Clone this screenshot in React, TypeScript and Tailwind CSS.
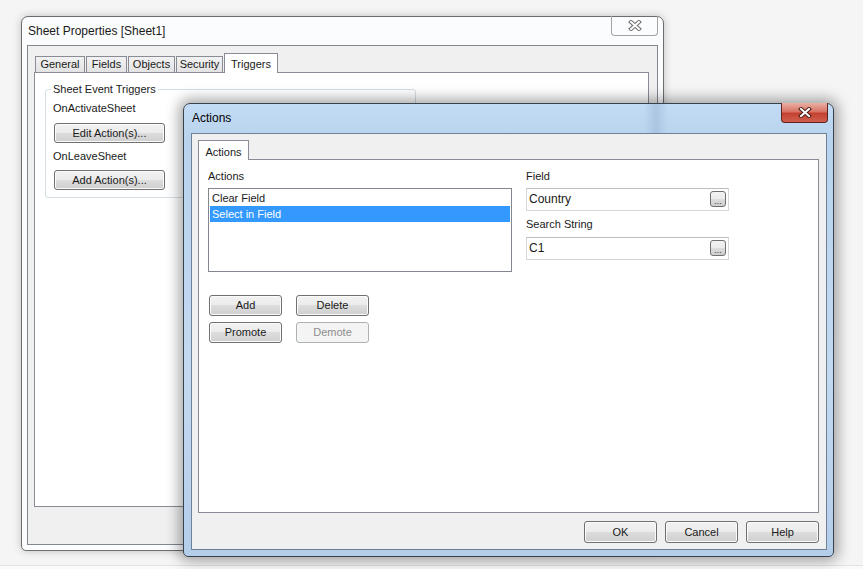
import React from 'react';

// Win7 style dialogs: "Sheet Properties" behind, "Actions" on top

type BtnProps = {
  label: string;
  className: string;
  disabled?: boolean;
};

const Btn = ({ label, className, disabled }: BtnProps) => {
  if (disabled) {
    return (
      <div className={`${className} flex items-center justify-center rounded-[3px] border border-[#adb2b5] bg-[#f4f4f4] text-[11px] text-[#8d8d8d]`}>
        {label}
      </div>
    );
  }
  return (
    <div className={`${className} flex items-center justify-center rounded-[3px] border border-[#707070] bg-[linear-gradient(to_bottom,#f2f2f2_0%,#ebebeb_50%,#dddddd_50%,#cfcfcf_100%)] shadow-[inset_0_0_0_1px_#fbfbfb] text-[11px] text-[#1a1a1a]`}>
      {label}
    </div>
  );
};

const CloseGlyph = ({ active }: { active: boolean }) => (
  <svg width="14" height="11" viewBox="0 0 14 11">
    <g strokeLinecap="square">
      <path d="M3 2 L11 9 M11 2 L3 9" stroke={active ? '#4a1c18' : '#6f6f6f'} strokeWidth="4" />
      <path d="M3 2 L11 9 M11 2 L3 9" stroke="#ffffff" strokeWidth="2" />
    </g>
  </svg>
);

const Ellipsis = () => (
  <div className="flex h-[16px] w-[16px] items-end justify-center rounded-[3px] border border-[#707070] bg-[linear-gradient(to_bottom,#f2f2f2_0%,#ebebeb_50%,#dddddd_50%,#cfcfcf_100%)] pb-[2px] text-[9px] leading-[6px] text-[#333]">
    ...
  </div>
);

const sheetTabs = [
  { name: 'General', w: 'w-[50px]' },
  { name: 'Fields', w: 'w-[41px]' },
  { name: 'Objects', w: 'w-[47px]' },
  { name: 'Security', w: 'w-[47px]' },
];

const SheetProperties = () => (
  <div className="absolute left-[21px] top-[16px] flex h-[535px] w-[643px] flex-col rounded-t-[7px] rounded-b-[5px] border border-[#6d6d6d] bg-[#fbfcfd] shadow-[0_0_8px_rgba(0,0,0,0.22)]">
    <div className="relative flex h-[28px] items-center pl-[6px] text-[12px] text-[#1a1a1a]">
      Sheet Properties [Sheet1]
      <div className="absolute right-[5px] top-[-1px] flex h-[20px] w-[47px] items-center justify-center rounded-b-[4px] border border-t-0 border-[#a3a3a3]">
        <CloseGlyph active={false} />
      </div>
    </div>
    <div className="mx-[5px] flex h-[500px] flex-col border border-[#828790] bg-[#f0f0f0] pl-[6px] pt-[7px]">
      <div className="flex h-[19px] items-end pl-[1px]">
        {sheetTabs.map((t) => (
          <div
            key={t.name}
            className={`${t.w} mr-[1px] flex h-[16px] items-center justify-center border border-b-0 border-[#898c95] bg-[linear-gradient(to_bottom,#f2f2f2,#e3e3e3)] text-[11px] text-[#1a1a1a]`}
          >
            {t.name}
          </div>
        ))}
        <div className="relative z-10 -mb-px flex h-[20px] w-[54px] items-start justify-center border border-b-0 border-[#898c95] bg-white pt-[2px] text-[11px] text-[#1a1a1a]">
          Triggers
        </div>
      </div>
      <div className="h-[435px] w-[615px] border border-[#898c95] bg-white pl-[10px] pt-[16px]">
        <div className="relative h-[109px] w-[371px] rounded-[3px] border border-[#d5dfe5] pl-[7px] pt-[12px] text-[#1a1a1a]">
          <div className="absolute left-[5px] top-[-7px] bg-white px-[2px] text-[11px] leading-[13px]">
            Sheet Event Triggers
          </div>
          <div className="text-[11px] leading-[13px]">OnActivateSheet</div>
          <Btn label="Edit Action(s)..." className="ml-[1px] mt-[8px] h-[20px] w-[111px]" />
          <div className="mt-[7px] text-[11px] leading-[13px]">OnLeaveSheet</div>
          <Btn label="Add Action(s)..." className="ml-[1px] mt-[7px] h-[20px] w-[111px]" />
        </div>
      </div>
    </div>
  </div>
);

const ActionsDialog = () => (
  <div className="absolute left-[183px] top-[103px] flex h-[454px] w-[651px] flex-col rounded-t-[7px] rounded-b-[5px] border border-[#37424e] bg-[linear-gradient(to_bottom,#c3dbf4_0%,#b9d3ee_8%,#c2d9f1_60%,#b4cde9_100%)] shadow-[0_0_14px_4px_rgba(0,0,0,0.35)]">
    <div className="relative flex h-[29px] items-center pb-[2px] pl-[8px] text-[12px] text-black">
      <div className="absolute left-[460px] top-0 h-[29px] w-[24px] bg-[linear-gradient(to_right,transparent,#a3bedb,transparent)] opacity-70" />
      <span className="relative">Actions</span>
      <div className="absolute right-[5px] top-[-1px] flex h-[20px] w-[47px] items-center justify-center rounded-b-[4px] border border-t-0 border-[#5b2622] bg-[linear-gradient(to_bottom,#eab0a4_0%,#d87466_45%,#c4412f_55%,#d1604f_100%)]">
        <CloseGlyph active />
      </div>
    </div>
    <div className="ml-[7px] flex h-[417px] w-[636px] flex-col border border-[#6e8196] bg-[#f0f0f0] pl-[6px] pt-[6px] text-[#1a1a1a]">
      <div className="flex h-[19px] items-end">
        <div className="relative z-10 -mb-px flex h-[20px] w-[51px] items-start justify-center border border-b-0 border-[#898c95] bg-white pt-[3px] text-[11px]">
          Actions
        </div>
      </div>
      <div className="flex h-[354px] w-[621px] border border-[#898c95] bg-white pl-[9px] pt-[10px]">
        <div className="flex w-[304px] flex-col">
          <div className="mb-[5px] text-[11px] leading-[13px]">Actions</div>
          <div className="h-[84px] w-[304px] border border-[#828790] bg-white p-px">
            <div className="h-[16px] pl-[2px] text-[11px] leading-[16px]">Clear Field</div>
            <div className="h-[16px] bg-[#3399ff] pl-[2px] text-[11px] leading-[16px] text-white">Select in Field</div>
          </div>
          <div className="ml-[1px] mt-[23px] flex gap-[14px]">
            <Btn label="Add" className="h-[21px] w-[73px]" />
            <Btn label="Delete" className="h-[21px] w-[73px]" />
          </div>
          <div className="ml-[1px] mt-[6px] flex gap-[14px]">
            <Btn label="Promote" className="h-[21px] w-[73px]" />
            <Btn label="Demote" className="h-[21px] w-[73px]" disabled />
          </div>
        </div>
        <div className="ml-[14px] flex w-[203px] flex-col">
          <div className="mb-[5px] text-[11px] leading-[13px]">Field</div>
          <div className="flex h-[23px] items-center justify-between border border-[#d6d6d6] border-t-[#bdbdbd] bg-white pb-[2px] pl-[2px] pr-[2px] text-[12px]">
            <span>Country</span>
            <Ellipsis />
          </div>
          <div className="mb-[6px] mt-[7px] text-[11px] leading-[13px]">Search String</div>
          <div className="flex h-[23px] items-center justify-between border border-[#d6d6d6] border-t-[#bdbdbd] bg-white pb-[2px] pl-[2px] pr-[2px] text-[12px]">
            <span>C1</span>
            <Ellipsis />
          </div>
        </div>
      </div>
      <div className="mt-[8px] flex w-[621px] justify-end gap-[8px]">
        <Btn label="OK" className="h-[22px] w-[73px]" />
        <Btn label="Cancel" className="h-[22px] w-[73px]" />
        <Btn label="Help" className="h-[22px] w-[73px]" />
      </div>
    </div>
  </div>
);

export default function App() {
  return (
    <div className="relative h-[569px] w-[863px] overflow-hidden bg-[#fafafa] font-['Liberation_Sans',Arial,sans-serif] text-black">
      <div className="h-[566px] border-b border-[#e3e3e3] bg-[#f5f5f5]" />
      <SheetProperties />
      <ActionsDialog />
    </div>
  );
}
